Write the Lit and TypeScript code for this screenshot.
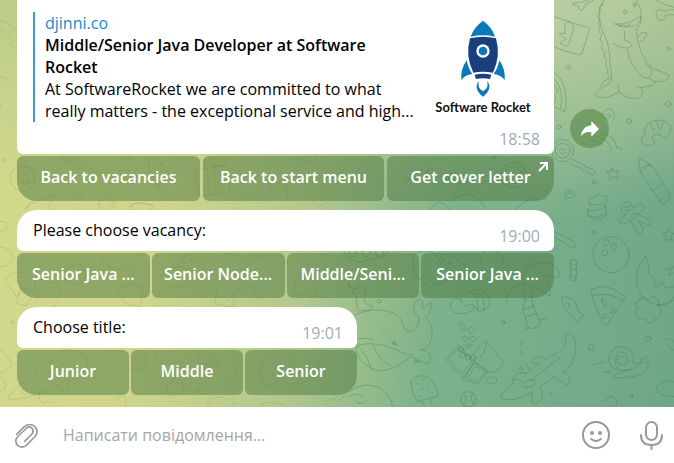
import { LitElement, html, css, svg } from "lit";
import { customElement } from "lit/decorators.js";

// Outline doodles; every sheet uses a 3:1 drawing grid.
const easternDoodles = svg`
<svg x="340" y="200" width="334" height="207" viewBox="0 0 1002 621">
  <path d="M40 350C70 325 150 320 180 355Q190 375 197 392C225 402 240 375 236 350C215 340 215 310 238 297Q252 305 248 325Q262 310 274 308C275 335 265 345 255 352C282 370 290 440 240 450C275 455 275 470 268 490C240 488 232 478 215 468C190 490 150 512 125 512C75 508 45 470 48 438C80 425 140 430 185 458L215 465M45 418Q75 412 98 418M50 432Q85 470 95 510M100 436Q115 480 155 498M152 424Q160 436 176 436"/>
  <circle cx="163" cy="428" r="4"/><circle cx="228" cy="484" r="5"/><circle cx="117" cy="304" r="6"/><circle cx="490" cy="368" r="5"/>
  <path d="M25 250Q30 270 52 265Q60 240 75 265L72 300Q80 320 96 315Q100 333 85 330M25 250L50 295Q45 320 60 333L85 330"/>
  <path d="M350 295C325 300 325 325 345 338C370 345 395 340 405 320C400 305 385 315 378 318Q362 315 365 300ZM375 283C390 265 435 262 446 290C455 315 440 335 415 332L395 315M390 274Q420 290 412 332M405 270Q440 290 432 330"/>
  <path d="M500 312C495 275 520 250 560 255C530 220 570 185 600 190C640 180 665 210 655 232L610 225Q635 250 630 288L590 262L566 256M552 265Q560 300 548 330L566 385Q580 390 603 370L580 320Q570 290 575 262M552 300L576 290M550 328L582 318M556 352L592 340M600 360L618 357M566 382L550 390"/>
  <path d="M548 418Q535 440 548 472M560 490Q570 505 562 515M630 575L646 610" stroke-dasharray="18 14"/>
  <path d="M358 370Q368 360 378 385Q376 395 366 388ZM387 384a9 9 0 1 0 14 12a9 9 0 1 0-14-12M366 415q9-12 18 0q-9 16-18 0M388 416q10-14 22 0q-10 17-22 0M376 436q9-8 18 0q-9 16-18 0M318 478L355 436L405 482L370 533ZM327 478L356 445L396 482L368 520ZM370 538L402 488L446 512L414 551ZM382 535L405 498L438 515L412 543ZM398 462L435 421L490 485Q480 515 447 519L400 480M438 424Q440 450 420 475M440 538q14-18 30 0v8q-16 12-30 0z"/>
  <circle cx="363" cy="448" r="8"/><circle cx="368" cy="465" r="8"/><circle cx="384" cy="472" r="8"/><circle cx="400" cy="473" r="8"/>
  <path d="M680 402C700 395 710 420 707 450C700 490 690 505 668 515Q690 520 690 550Q680 560 670 545Q645 545 645 528Q625 545 600 560Q610 580 605 595Q595 615 576 608L575 575C550 595 500 608 482 592Q480 578 505 565L520 550C515 530 530 515 560 520Q580 500 600 490Q570 490 575 480Q600 460 615 478C650 460 675 450 676 430ZM570 545Q620 500 665 470M515 540Q535 532 550 550Q575 530 588 548Q575 568 552 562M540 556q10 8 22 0"/>
  <circle cx="543" cy="506" r="5"/>
  <path d="M212 545Q235 515 270 535Q292 560 294 588L234 605Q215 580 212 545M245 604L255 621M270 596L277 618M226 545l6 8M246 540l8-4M262 556l4 9M240 568l8-3M270 575l8 4M235 588l9 2"/>
  <circle cx="385" cy="598" r="23"/><path d="M372 582Q385 600 370 616M398 580Q388 600 402 612M0 600Q50 540 110 560Q150 575 158 621M25 590Q50 575 70 590M45 600Q60 620 80 600"/>
  <circle cx="754" cy="442" r="9"/><circle cx="924" cy="417" r="8"/><circle cx="874" cy="588" r="5"/><circle cx="762" cy="98" r="5"/>
  <circle cx="813" cy="164" r="54"/><ellipse cx="799" cy="128" rx="7" ry="10" transform="rotate(35 799 128)"/><ellipse cx="821" cy="141" rx="7" ry="11" transform="rotate(35 821 141)"/><ellipse cx="794" cy="158" rx="7" ry="10" transform="rotate(35 794 158)"/>
  <path d="M753 271Q795 240 854 289L850 301L801 375Q795 380 788 370L755 287ZM756 287Q810 275 849 302M786 297q14 3 12 22q-12-3-12-22M811 338q2-16 13-14q2 15-13 14M788 354q2-20 9-10q4 14-3 12z"/>
  <path d="M665 292Q675 285 700 300Q715 315 715 335L734 346L722 350L717 368Q702 365 703 350Q670 340 665 292M680 305Q690 305 685 320"/>
  <path d="M690 182Q700 176 712 182L708 205L710 225L704 244L690 240L692 215ZM690 190L712 198M690 210L708 206M692 225L710 232"/>
  <path d="M642 95L692 120Q710 130 705 142Q690 145 682 134L640 108"/>
  <path d="M818 533Q830 515 870 510Q895 500 905 488Q900 475 915 475L925 495Q925 520 880 530L820 535ZM870 508Q815 520 806 485Q805 440 845 440Q885 445 880 490Q895 490 905 486M858 475Q835 460 830 480Q840 505 860 490Q872 460 840 455Q815 475 830 502M755 495L775 490L795 487M790 518L812 514M905 476L898 470M915 474L920 468"/>
  <path d="M917 170C870 220 885 290 935 310Q985 330 1002 290M917 170Q930 190 925 220L945 240L942 265L970 248L975 265L1002 260M900 300C880 300 885 325 895 325C875 345 895 365 915 355C920 375 945 370 945 355C970 355 965 325 955 320C965 295 935 280 925 300C915 288 902 290 900 300M950 318Q980 310 1002 300M975 210L1000 200L985 225L1000 220"/>
  <path d="M950 560Q970 535 1002 545M950 560Q945 590 1002 590M965 560l5 3M980 572l4-4M990 555l4 3M980 420L990 415L1002 425M980 430Q995 455 1002 450M798 600q20-22 30 0q8 8-2 18"/>
</svg>
<svg x="550" y="0" width="124" height="150" viewBox="0 0 372 450">
  <path d="M162 0C145 20 145 60 158 95Q180 130 180 190Q190 235 178 250Q130 275 138 290Q170 300 207 275Q230 300 265 295Q285 285 272 262Q310 262 315 245Q360 245 358 225Q335 215 307 205Q265 165 258 90Q290 60 260 0M195 72Q235 75 273 48Q270 75 250 78Q220 85 195 72M205 73L208 80L220 74L228 79L240 72M223 92L224 122Q245 125 245 138Q230 155 190 130M265 110Q275 90 290 100Q288 120 268 127M232 150Q240 200 280 232Q305 245 305 210Q295 195 285 190M204 253Q202 265 208 278M258 258L272 263M315 245L300 237"/>
  <path d="M160 12Q142 18 150 35Q138 45 148 60Q140 72 150 83Q142 95 155 105Q145 118 158 130Q150 145 164 155Q158 170 170 180Q162 195 175 207Q165 220 180 230M180 235Q160 240 150 262"/>
  <ellipse cx="225" cy="35" rx="4" ry="7"/><ellipse cx="254" cy="15" rx="4" ry="7"/>
  <path d="M12 50L120 85L95 162Q80 168 12 140M45 70L55 65L72 75Q65 120 50 140L30 130L48 118L28 100L45 100ZM12 216Q60 250 45 335L12 320M12 235Q45 270 32 325M12 255q15 10 8 25M12 285q12 8 0 25M68 12Q80 5 92 8L115 0M68 12Q75 20 85 18Q85 35 98 30L105 14L132 0M320 0Q340 15 372 22M372 30Q355 25 345 35Q325 20 318 40Q318 65 340 60Q352 50 345 45L372 44"/>
  <circle cx="54" cy="202" r="6"/><circle cx="356" cy="147" r="5"/><circle cx="355" cy="312" r="8"/><circle cx="237" cy="364" r="7"/><circle cx="27" cy="381" r="6"/>
  <path d="M170 345Q185 338 180 352Q162 362 158 345Q165 320 185 328Q200 345 188 365M130 405Q120 415 130 425Q145 420 155 435Q160 425 150 415Q175 420 182 445Q185 460 198 465Q210 465 217 450Q210 440 200 443Q195 410 170 405Q150 400 145 412ZM290 375Q325 345 360 375Q370 400 345 415Q325 395 305 410L315 430Q300 445 275 430Q270 415 285 405Q280 390 290 375M320 364L325 385M340 368L330 390M300 370L312 392"/>
</svg>
<svg x="550" y="150" width="124" height="100" viewBox="0 0 372 300">
  <path d="M66 28L130 60Q140 70 128 75L58 38M185 55L192 65L207 62L200 74L205 86L192 80L178 88L178 74L170 65L182 66ZM265 22L305 46L360 134Q360 160 335 160L272 68ZM272 68Q290 46 305 46M270 56L298 42M303 120Q320 121 335 101M330 151Q345 146 355 136M65 130Q50 125 52 140Q65 150 75 135Q70 112 50 125Q35 140 58 158"/>
  <path d="M115 175Q110 185 115 195Q140 220 170 195L165 165M120 165Q110 142 130 145Q140 125 155 138Q180 138 172 152L165 165Q140 160 120 165M112 180Q135 190 168 170M117 198Q145 208 170 185M215 180Q208 160 230 156Q250 156 250 175L270 160Q288 165 278 180L262 192L290 205Q310 212 300 225Q285 225 265 212L278 235Q275 260 262 250L240 208Q225 228 210 220Q200 210 215 203L230 193Q215 193 215 180M223 173q7-8 12 0M236 170q7-8 10 0M225 180q10 8 18-2M245 198a8 8 0 1 0 16 0a8 8 0 1 0-16 0M340 250L350 248L357 237L362 248L372 250L364 260L367 272L357 267L345 272L348 260Z"/>
  <circle cx="132" cy="98" r="5"/>
</svg>
<svg x="540" y="130" width="60" height="50" viewBox="0 0 180 150">
  <circle cx="68" cy="62" r="33"/><circle cx="68" cy="62" r="22"/><path d="M76 62Q66 48 58 62Q64 76 78 68"/>
</svg>
<svg x="280" y="150" width="275" height="60" viewBox="0 0 825 180">
  <path d="M450 50Q440 75 420 95Q400 80 380 90M505 85Q500 70 530 70Q560 85 545 100Q520 110 505 85Q540 100 570 80M510 155Q570 110 600 155Q620 170 615 180M450 180Q475 135 510 180M705 180Q750 130 800 150"/><circle cx="643" cy="22" r="4"/><circle cx="700" cy="75" r="38"/><circle cx="700" cy="75" r="25"/>
</svg>
<svg x="340" y="250" width="225" height="60" viewBox="0 0 675 180">
  <path d="M10 0Q15 30 60 35L130 20Q150 0 140-10M290 20Q260-20 220 20Q210 80 270 110L385 70Q360 10 290 10ZM420 30Q430-10 460 0Q490 10 490 40"/><circle cx="38" cy="8" r="12"/><circle cx="78" cy="8" r="12"/><circle cx="118" cy="8" r="12"/><circle cx="305" cy="32" r="7"/><circle cx="328" cy="37" r="4"/>
</svg>`;

const westernDoodles = svg`
<svg x="0" y="0" width="340" height="210" viewBox="0 0 1020 630">
  <path d="M0 60Q35 70 51 95M0 85Q20 95 40 125L51 118M30 130Q35 145 51 150M0 230Q15 228 25 245M0 310q8 4 0 10"/>
  <circle cx="12" cy="480" r="5"/><circle cx="68" cy="535" r="38"/><circle cx="78" cy="527" r="25"/><path d="M70 515q12-10 16 2q-2 8-10 8q14 4 8 16q-12 8-18-4"/>
  <path d="M185 465q20 30 50 10M190 478q18 22 48 8M235 490L310 520Q312 530 300 528L230 500M445 472L450 515L485 575Q505 600 540 570L485 490ZM450 515Q465 490 485 490M470 555Q500 550 515 530M355 515L362 508L372 512L382 508L388 516L382 526L362 526Z"/>
  <circle cx="388" cy="475" r="6"/><circle cx="555" cy="478" r="8"/><path d="M585 510L680 495L690 575L600 590ZM620 505L630 585M640 500L650 582M620 500Q600 470 635 475Q640 500 640 500Q670 460 685 480Q680 498 640 500M870 480Q880 460 900 480Q925 440 955 470Q960 490 880 485M700 595L725 570L745 600L780 570L800 610M810 600V560L840 548L860 560V600M920 580Q950 560 990 560L1015 545Q1000 620 950 615ZM940 590L1000 570M225 575Q250 560 250 585Q245 605 225 600Q215 580 238 585M75 628Q110 590 165 588Q150 600 145 628M300 628Q285 600 310 600Q315 580 330 595Q355 590 348 608L335 628M388 628Q395 605 420 610L455 615"/>
</svg>
<svg x="0" y="200" width="340" height="207" viewBox="0 0 1020 621">
  <path d="M75 28Q105-25 165-10M300 0Q290 20 320 28Q345 10 340 0M388 20Q420-5 460 20Q450 40 390 28M0 65q22-5 20 15q-5 18-20 12M0 140Q40 145 38 180Q20 205 0 200M15 240Q40 200 90 225Q115 245 100 280L70 265L50 290L20 250M62 265L48 310L80 318L95 290M110 300Q125 235 170 250Q195 280 160 320"/>
  <path d="M305 160Q310 205 360 210Q410 205 412 160M190 235Q215 170 250 200Q270 240 235 255ZM240 190L255 180M355 265Q390 245 430 260L420 320L375 310ZM480 230Q540 180 560 210Q590 190 585 240Q560 270 500 260M540 170L560 165L545 190L565 188M565 165L580 160L570 182L588 182M645 310Q650 240 675 250Q710 280 700 320ZM680 305Q740 235 780 275M760 260q10-22 28-8l15 20q-10 28-25 22q-30-10-18-34M670 160Q700 155 720 180Q770 150 815 190Q840 180 850 165M885 250Q900 220 940 240L950 290L890 285Z"/>
  <circle cx="858" cy="188" r="5"/><circle cx="37" cy="367" r="5"/><path d="M0 445L38 490Q25 515 0 518M0 530Q20 540 15 565L0 572M25 590Q60 540 115 535Q90 505 125 500Q180 470 185 450Q250 440 265 490Q250 530 205 545Q210 580 180 570L165 550Q145 585 30 600ZM55 575q8-10 15 0q-4 8 8 8M120 570Q110 600 130 610L150 605M125 520Q180 510 220 465M345 605Q350 585 370 590Q385 595 375 621M380 470Q400 440 430 455Q450 480 430 505Q400 520 385 500M400 485q15-15 25 0q0 20-20 15M430 500Q465 500 470 465M590 450Q645 455 655 505L600 490ZM660 550Q700 550 715 505M500 560Q510 535 550 550Q560 580 510 590ZM520 545L515 535L545 540M780 510Q800 440 880 450Q960 460 955 510Q930 565 820 550Q780 570 790 540ZM840 490Q835 465 860 470Q885 460 880 485L860 505ZM620 621Q625 590 660 590Q710 600 705 621M780 615Q820 595 860 621M960 595Q980 610 1000 595L1020 610"/>
  <circle cx="593" cy="572" r="6"/>
</svg>`;

@customElement("chat-wallpaper")
export class ChatWallpaper extends LitElement {
  static styles = css`
    :host {
      display: block;
      background:
        radial-gradient(ellipse 40% 55% at 80% 0%, rgba(190, 208, 168, 0.9), rgba(160, 195, 155, 0)),
        linear-gradient(180deg, rgba(176, 200, 136, 0.7) 0%, rgba(176, 200, 136, 0) 45%),
        linear-gradient(100deg, #d2d88c 0%, #cfd68c 26%, #b3c88d 47%, #7eb28b 66%, #6fa688 100%);
    }
    .art {
      display: block;
      width: 100%;
      height: 100%;
      fill: none;
      stroke: rgba(50, 115, 75, 0.32);
      stroke-width: 3;
      stroke-linecap: round;
      stroke-linejoin: round;
    }
    .west {
      stroke: rgba(110, 140, 40, 0.2);
    }
  `;
  render() {
    return html`<svg class="art" viewBox="0 0 674 407" preserveAspectRatio="xMinYMax slice" aria-hidden="true">
      <g>${easternDoodles}</g>
      <g class="west">${westernDoodles}</g>
    </svg>`;
  }
}

@customElement("rocket-logo")
export class RocketLogo extends LitElement {
  static styles = css`
    :host {
      display: flex;
      flex-direction: column;
      align-items: center;
      color: #111;
      font: 700 13px/18px Lato, sans-serif;
      white-space: nowrap;
    }
    svg {
      display: block;
      width: 50px;
      height: 78px;
    }
  `;
  render() {
    return html`<svg viewBox="0 0 150 234" aria-hidden="true">
        <path fill="#0b7bb8" d="M75 2Q103 22 111 50Q75 42 38 50Q47 22 75 2Z" />
        <path fill="#1a3f7c" d="M36 55Q75 46 114 55Q129 108 105 158Q75 152 46 158Q21 108 36 55Z" />
        <circle cx="75" cy="93" r="20" fill="#fff" />
        <circle cx="75" cy="93" r="13" fill="#0b7bb8" />
        <path fill="#0b7bb8" d="M26 121Q31 146 43 162Q20 164 10 181Q7 148 26 121ZM124 121Q119 146 107 162Q130 164 140 181Q143 148 124 121Z" />
        <path fill="#1a3f7c" d="M50 164Q75 158 100 164L96 177Q75 172 54 177Z" />
        <path fill="#0b7bb8" d="M63 182Q44 205 75 230Q106 205 87 182Q94 203 75 214Q56 203 63 182Z" />
      </svg>
      <span>Software Rocket</span>`;
  }
}

@customElement("reply-keyboard")
export class ReplyKeyboard extends LitElement {
  static properties = { labels: { type: Array }, variant: { type: String, reflect: true } };
  declare labels: string[];
  declare variant: string;

  static styles = css`
    :host {
      display: grid;
      grid-auto-flow: column;
      grid-auto-columns: minmax(0, 1fr);
      gap: 2px;
    }
    :host([variant="links"]) {
      grid-auto-flow: row;
      grid-template-columns: 183fr 181fr 167fr;
      gap: 3px;
    }
    .key {
      position: relative;
      height: 45px;
      padding: 0 0 4px;
      border: 0;
      border-radius: 6px;
      background: rgba(78, 119, 64, 0.49);
      color: #fff;
      font: 600 16px/22px "Open Sans", "Noto Sans", sans-serif;
      white-space: nowrap;
      cursor: pointer;
    }
    .key:first-child {
      border-bottom-left-radius: 20px;
    }
    .key:last-child {
      border-bottom-right-radius: 20px;
    }
    .out {
      position: absolute;
      top: 6px;
      right: 6px;
      width: 10px;
      height: 10px;
      fill: none;
      stroke: #fff;
      stroke-width: 2;
    }
  `;
  render() {
    return this.labels.map(
      (label, i) => html`<button class="key" type="button">
        ${label}${this.variant === "links" && i === this.labels.length - 1
          ? svg`<svg class="out" viewBox="0 0 10 10" aria-hidden="true"><path d="M2 1H9V8M9 1L1 9" /></svg>`
          : null}
      </button>`
    );
  }
}

@customElement("app-root")
export class AppRoot extends LitElement {
  static styles = css`
    :host {
      display: flex;
      flex-direction: column;
      min-height: 100vh;
      font: 16px/22px "Open Sans", "Noto Sans", sans-serif;
      color: #000;
    }
    .chat {
      position: relative;
      flex: 1;
      display: flex;
      flex-direction: column;
      overflow: hidden;
    }
    chat-wallpaper {
      position: absolute;
      inset: 0;
    }
    .thread {
      position: relative;
      flex: 1;
      display: flex;
      flex-direction: column;
      gap: 9px;
      padding: 0 65px 12px 17px;
    }
    .row {
      display: grid;
      grid-template-columns: minmax(0, 537px) 39px;
      column-gap: 16px;
      row-gap: 2px;
    }
    .row.short {
      grid-template-columns: minmax(0, 340px);
    }
    .bubble {
      display: flex;
      justify-content: space-between;
      box-sizing: border-box;
      min-height: 41px;
      padding: 9px 14px 0 16px;
      border-radius: 20px 20px 6px 6px;
      background: #fff;
    }
    .bubble p {
      margin: 0;
    }
    .bubble time {
      padding-top: 6px;
    }
    time {
      color: #a0acb6;
    }
    .bubble.tall {
      display: block;
      padding-top: 12px;
      padding-bottom: 4px;
      border-radius: 0 0 6px 6px;
    }
    .tall time {
      display: block;
      text-align: right;
    }
    .preview {
      display: flex;
      justify-content: space-between;
      padding: 0 4px 0 10px;
      border-left: 2px solid #3a9bd9;
    }
    .summary {
      flex: 1;
      max-width: 374px;
    }
    .site {
      color: #168acd;
      text-decoration: none;
    }
    .title {
      font-weight: 600;
    }
    rocket-logo {
      width: 106px;
      padding-top: 8px;
    }
    .share {
      align-self: end;
      display: grid;
      place-items: center;
      width: 39px;
      height: 39px;
      margin-bottom: 6px;
      padding: 0;
      border: 0;
      border-radius: 50%;
      background: rgba(88, 135, 72, 0.6);
      cursor: pointer;
    }
    .share svg {
      width: 20px;
      height: 18px;
      fill: #fff;
    }
    .composer {
      display: flex;
      align-items: center;
      box-sizing: border-box;
      height: 56px;
      padding: 0 8px 0 12px;
      background: #fff;
    }
    .tool {
      display: block;
      padding: 0;
      border: 0;
      background: none;
      cursor: pointer;
    }
    .tool svg {
      display: block;
      width: 30px;
      height: 30px;
      fill: none;
      stroke: #999;
      stroke-width: 2;
      stroke-linecap: round;
      stroke-linejoin: round;
    }
    .tool .clip {
      stroke-width: 5;
    }
    .field {
      flex: 1;
      min-width: 0;
      height: 40px;
      margin: 0 16px 0 21px;
      padding: 0;
      border: 0;
      outline: 0;
      background: none;
      font: inherit;
      color: #000;
    }
    .field::placeholder {
      color: #a6a6a6;
      opacity: 1;
    }
    .mic {
      margin-left: 25px;
    }
  `;

  render() {
    return html`
      <main class="chat">
        <chat-wallpaper></chat-wallpaper>
        <div class="thread">
          <section class="row">
            <article class="bubble tall">
              <div class="preview">
                <div class="summary">
                  <a class="site" href="#djinni">djinni.co</a>
                  <p class="title">Middle/Senior Java Developer at Software Rocket</p>
                  <p>At SoftwareRocket we are committed to what really matters - the exceptional service and high...</p>
                </div>
                <rocket-logo></rocket-logo>
              </div>
              <time>18:58</time>
            </article>
            <button class="share" type="button" aria-label="Share">
              <svg viewBox="0 0 60 54" aria-hidden="true">
                <path d="M34 3L57 27L34 50V37Q15 33 3 49Q6 18 34 16Z" />
              </svg>
            </button>
            <reply-keyboard variant="links" .labels=${["Back to vacancies", "Back to start menu", "Get cover letter"]}></reply-keyboard>
          </section>
          <section class="row">
            <article class="bubble">
              <p>Please choose vacancy:</p>
              <time>19:00</time>
            </article>
            <span></span>
            <reply-keyboard .labels=${["Senior Java ...", "Senior Node...", "Middle/Seni...", "Senior Java ..."]}></reply-keyboard>
          </section>
          <section class="row short">
            <article class="bubble">
              <p>Choose title:</p>
              <time>19:01</time>
            </article>
            <reply-keyboard .labels=${["Junior", "Middle", "Senior"]}></reply-keyboard>
          </section>
        </div>
      </main>
      <form class="composer" @submit=${(e: Event) => e.preventDefault()}>
        <button class="tool" type="button" aria-label="Прикріпити">
          <svg class="clip" viewBox="0 0 90 90">
            <path d="M14 43L37 20Q54 7 69 20Q82 35 68 51L42 77Q29 86 17 76Q6 64 16 51L44 24Q54 17 61 26Q67 34 60 42L38 64" />
          </svg>
        </button>
        <input class="field" type="text" aria-label="Написати повідомлення" placeholder="Написати повідомлення..." />
        <button class="tool" type="button" aria-label="Емодзі">
          <svg viewBox="0 0 30 30">
            <circle cx="15" cy="15" r="13" />
            <circle cx="11" cy="13" r="1" />
            <circle cx="19" cy="13" r="1" />
            <path d="M10 19Q15 23 20 19" />
          </svg>
        </button>
        <button class="tool mic" type="button" aria-label="Голосове повідомлення">
          <svg viewBox="0 0 30 30">
            <rect x="10" y="2" width="11" height="18" rx="5.5" />
            <path d="M5 15Q5 25 15.5 25Q26 25 26 15M15.5 25V29" />
          </svg>
        </button>
      </form>
    `;
  }
}
